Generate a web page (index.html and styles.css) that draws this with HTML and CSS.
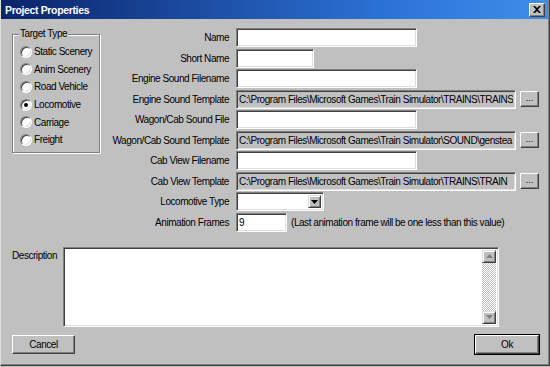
FILE: index.html
```html
<!DOCTYPE html>
<html>
<head>
  <title>Project Properties</title>
  <link rel="stylesheet" href="styles.css">
</head>
<body>
  <div class="window">
    <div class="titlebar">
      <span class="title">Project Properties</span>
      <button class="close-btn">
        <svg width="8" height="7" viewBox="0 0 8 7"><path d="M0 0h2l2 2 2-2h2L5 3.5 8 7H6L4 5 2 7H0l3-3.5z" fill="#000"/></svg>
      </button>
    </div>

    <div class="main">
      <fieldset class="group">
        <legend>Target Type</legend>
        <label class="radio-row"><span class="radio"></span>Static Scenery</label>
        <label class="radio-row"><span class="radio"></span>Anim Scenery</label>
        <label class="radio-row"><span class="radio"></span>Road Vehicle</label>
        <label class="radio-row"><span class="radio checked"></span>Locomotive</label>
        <label class="radio-row"><span class="radio"></span>Carriage</label>
        <label class="radio-row"><span class="radio"></span>Freight</label>
      </fieldset>

      <div class="form">
        <label>Name</label>
        <div class="cell"><input class="field w-long"></div>

        <label>Short Name</label>
        <div class="cell"><input class="field w-short"></div>

        <label>Engine Sound Filename</label>
        <div class="cell"><input class="field w-long"></div>

        <label>Engine Sound Template</label>
        <div class="cell">
          <input class="field w-path readonly" readonly value="C:\Program Files\Microsoft Games\Train Simulator\TRAINS\TRAINS">
          <button class="browse">...</button>
        </div>

        <label>Wagon/Cab Sound File</label>
        <div class="cell"><input class="field w-long"></div>

        <label>Wagon/Cab Sound Template</label>
        <div class="cell">
          <input class="field w-path readonly" readonly value="C:\Program Files\Microsoft Games\Train Simulator\SOUND\genstea">
          <button class="browse">...</button>
        </div>

        <label>Cab View Filename</label>
        <div class="cell"><input class="field w-long"></div>

        <label>Cab View Template</label>
        <div class="cell">
          <input class="field w-path readonly" readonly value="C:\Program Files\Microsoft Games\Train Simulator\TRAINS\TRAIN">
          <button class="browse">...</button>
        </div>

        <label>Locomotive Type</label>
        <div class="cell">
          <div class="combo">
            <span class="combo-btn">
              <svg width="7" height="4" viewBox="0 0 7 4"><path d="M0 0h7L3.5 4z" fill="#000"/></svg>
            </span>
          </div>
        </div>

        <label>Animation Frames</label>
        <div class="cell">
          <input class="field w-num" value="9">
          <span class="hint">(Last animation frame will be one less than this value)</span>
        </div>
      </div>
    </div>

    <div class="desc-row">
      <label class="desc-label">Description</label>
      <div class="memo">
        <div class="memo-body"></div>
        <div class="vscroll">
          <span class="sb-btn">
            <svg width="7" height="4" viewBox="0 0 7 4"><path d="M3.5 0L7 4H0z" fill="#808080"/></svg>
          </span>
          <span class="sb-track"></span>
          <span class="sb-btn">
            <svg width="7" height="4" viewBox="0 0 7 4"><path d="M0 0h7L3.5 4z" fill="#808080"/></svg>
          </span>
        </div>
      </div>
    </div>

    <div class="buttons">
      <button class="btn">Cancel</button>
      <button class="btn default">Ok</button>
    </div>
  </div>
</body>
</html>
```

FILE: styles.css
```css
body {
  margin: 0;
  background-color: #c0c0c0;
}

.window {
  width: 550px;
  height: 366px;
  box-sizing: border-box;
  display: flex;
  flex-direction: column;
  background-color: #c0c0c0;
  border-left: 1px solid #dfdfdf;
  border-right: 1px solid #404040;
  border-bottom: 1px solid #404040;
  box-shadow: inset -1px -1px #808080;
  font-family: "Liberation Sans", Arial, sans-serif;
  font-size: 10px;
  letter-spacing: -0.45px;
  color: #000;
}

/* title bar */

.titlebar {
  height: 19px;
  flex-shrink: 0;
  display: flex;
  align-items: center;
  justify-content: space-between;
  padding: 0 3px 0 4px;
  margin-right: 1px;
  background: linear-gradient(to right, #0a246a, #2c72d6 70%, #3e8eea);
}

.title {
  color: #fff;
  font-weight: bold;
  font-size: 10.5px;
  letter-spacing: -0.35px;
}

.close-btn {
  width: 16px;
  height: 14px;
  padding: 0;
  display: flex;
  align-items: center;
  justify-content: center;
  background-color: #c0c0c0;
  border: 1px solid;
  border-color: #fff #404040 #404040 #fff;
  box-shadow: inset -1px -1px #808080;
}

/* top area */

.main {
  display: flex;
  padding: 9px 0 0 11px;
}

.group {
  width: 88px;
  box-sizing: border-box;
  margin: 0;
  padding: 3px 0 3px 7px;
  border: 1px solid #808080;
  box-shadow: 1px 1px 0 #fff, inset 1px 1px 0 #fff;
  align-self: flex-start;
}

.group legend {
  padding: 0 1px;
  margin-left: -1px;
  background-color: #c0c0c0;
  line-height: 12px;
}

.radio-row {
  height: 17.6px;
  display: flex;
  align-items: center;
  white-space: nowrap;
}

.radio {
  position: relative;
  width: 12px;
  height: 12px;
  box-sizing: border-box;
  margin-right: 2px;
  flex-shrink: 0;
  border-radius: 50%;
  background-color: #fff;
  border: 1px solid;
  border-color: #808080 #fff #fff #808080;
  box-shadow: inset 1px 1px #404040, inset -1px -1px #dfdfdf;
}

.radio.checked::after {
  content: "";
  position: absolute;
  left: 3px;
  top: 3px;
  width: 4px;
  height: 4px;
  border-radius: 50%;
  background-color: #000;
}

.form {
  display: grid;
  grid-template-columns: 129px auto;
  grid-auto-rows: 19px;
  column-gap: 7px;
  row-gap: 1.55px;
}

.form label {
  text-align: right;
  align-self: center;
  white-space: nowrap;
}

.cell {
  display: flex;
  align-items: center;
}

.field {
  height: 19px;
  box-sizing: border-box;
  margin: 0;
  padding: 0 2px;
  font-family: inherit;
  font-size: 10px;
  letter-spacing: -0.45px;
  color: #000;
  background-color: #fff;
  border: 1px solid;
  border-color: #808080 #fff #fff #808080;
  box-shadow: inset 1px 1px #404040, inset -1px -1px #dfdfdf;
  outline: none;
}

.field.readonly {
  background-color: #c0c0c0;
}

.w-long { width: 181px; }
.w-short { width: 78px; }
.w-path { width: 280px; }
.w-num { width: 51px; }

.browse {
  width: 19px;
  height: 16px;
  margin-left: 4px;
  padding: 0 0 3px;
  font-family: inherit;
  font-size: 9px;
  line-height: 8px;
  background-color: #c0c0c0;
  border: 1px solid;
  border-color: #fff #404040 #404040 #fff;
  box-shadow: inset -1px -1px #808080;
}

.combo {
  width: 88px;
  height: 19px;
  box-sizing: border-box;
  display: flex;
  justify-content: flex-end;
  align-items: stretch;
  padding: 2px;
  background-color: #fff;
  border: 1px solid;
  border-color: #808080 #fff #fff #808080;
  box-shadow: inset 1px 1px #404040, inset -1px -1px #dfdfdf;
}

.combo-btn {
  width: 13px;
  display: flex;
  align-items: center;
  justify-content: center;
  box-sizing: border-box;
  background-color: #c0c0c0;
  border: 1px solid;
  border-color: #dfdfdf #404040 #404040 #dfdfdf;
  box-shadow: inset 1px 1px #fff, inset -1px -1px #808080;
}

.hint {
  margin-left: 4px;
  white-space: nowrap;
}

/* description */

.desc-row {
  display: flex;
  margin-top: 15px;
  padding-left: 11px;
}

.desc-label {
  width: 51px;
  padding-top: 3px;
}

.memo {
  width: 436px;
  height: 80px;
  box-sizing: border-box;
  display: flex;
  padding: 2px;
  background-color: #fff;
  border: 1px solid;
  border-color: #808080 #fff #fff #808080;
  box-shadow: inset 1px 1px #404040, inset -1px -1px #dfdfdf;
}

.memo-body {
  flex: 1;
}

.vscroll {
  width: 14px;
  display: flex;
  flex-direction: column;
}

.sb-btn {
  height: 13px;
  box-sizing: border-box;
  display: flex;
  align-items: center;
  justify-content: center;
  background-color: #c0c0c0;
  border: 1px solid;
  border-color: #dfdfdf #404040 #404040 #dfdfdf;
  box-shadow: inset 1px 1px #fff, inset -1px -1px #808080;
}

.sb-track {
  flex: 1;
  background: repeating-conic-gradient(#fff 0 25%, #c0c0c0 0 50%) 0 0 / 2px 2px;
}

/* bottom buttons */

.buttons {
  display: flex;
  justify-content: space-between;
  margin-top: 8px;
  padding: 0 10px 0 11px;
}

.btn {
  width: 63px;
  height: 19px;
  padding: 0;
  font-family: inherit;
  font-size: 10px;
  letter-spacing: -0.45px;
  color: #000;
  background-color: #c0c0c0;
  border: 1px solid;
  border-color: #fff #404040 #404040 #fff;
  box-shadow: inset -1px -1px #808080;
}

.btn.default {
  width: 64px;
  outline: 1px solid #000;
  outline-offset: 0;
}
```
